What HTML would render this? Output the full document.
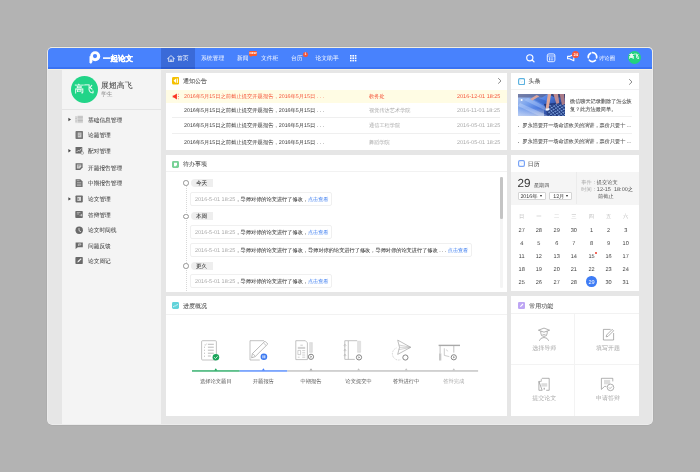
<!DOCTYPE html>
<html><head><meta charset="utf-8">
<style>
*{margin:0;padding:0;box-sizing:border-box}
html,body{width:700px;height:472px;overflow:hidden;background:#b3b3b3;font-family:"Liberation Sans",sans-serif;color:#555;text-rendering:geometricPrecision}
body{position:relative}
.a{position:absolute}
.t{position:absolute;white-space:nowrap;line-height:11.6px;height:11.6px}
.card{position:absolute;background:#fff}
.hr{position:absolute;height:1px;background:#efefef}
.nav{position:absolute;color:#fff;font-size:5.8px;line-height:10px;top:53.9px;white-space:nowrap}
.si{position:absolute;font-size:5.7px;color:#444;-webkit-text-stroke-width:0.06px;line-height:11.2px;left:88px;white-space:nowrap}
.sic{position:absolute;left:75px;width:8px;height:8px}
.arr{position:absolute;left:68px;width:0;height:0;border-top:2.2px solid transparent;border-bottom:2.2px solid transparent;border-left:3px solid #555}
.ttl{position:absolute;font-size:6px;color:#4c4c4c;-webkit-text-stroke-width:0.04px;line-height:12.4px;white-space:nowrap}
</style></head><body><div id="root" style="position:absolute;left:0;top:0;width:700px;height:472px;overflow:hidden;will-change:transform">
<!-- window -->
<div class="a" style="left:47px;top:47px;width:606px;height:378px;background:#ececec;border-radius:5px;box-shadow:0 0 0.6px 0.2px #9a9a9a"></div><div class="a" style="left:47.5px;top:47px;width:605px;height:6px;background:#f2eee0;border-radius:5px 5px 0 0"></div>
<div class="a" style="left:48px;top:48px;width:604px;height:376px;background:#e6e6e6;border-radius:4px"></div>
<div class="a" style="left:48px;top:48px;width:604px;height:21px;background:#4882fd;border-radius:4px 4px 0 0"></div><div class="a" style="left:48px;top:67.4px;width:604px;height:1.6px;background:#3a72f2"></div>
<div class="a" style="left:48px;top:69px;width:604px;height:1px;background:#f6f1e1"></div>
<div class="a" style="left:62px;top:70px;width:99px;height:354px;background:#f4f4f4"></div>

<!-- header -->
<div class="a" style="left:161.4px;top:48px;width:33.5px;height:21px;background:#3a6ad8"></div><div class="a" style="left:161.4px;top:67.4px;width:33.5px;height:1.6px;background:#2d5cd0"></div>

<!-- logo -->
<svg class="a" style="left:88px;top:50px" width="14" height="16" viewBox="0 0 14 16">
 <circle cx="7.2" cy="6.3" r="5.0" fill="#fff"/>
 <path d="M1.5 6.2 H4.4 V12 L2.9 14.1 L1.5 12.3 Z" fill="#fff"/>
 <circle cx="7.0" cy="6.1" r="2.1" fill="#4882fd"/>
</svg>
<div class="t" style="left:103px;top:53px;font-size:7.5px;font-weight:bold;color:#fff;-webkit-text-stroke:0.35px #fff">一起论文</div>
<!-- nav -->
<svg class="a" style="left:167.4px;top:54.6px" width="8" height="7.4" viewBox="0 0 8 7.4"><path d="M0.5 3.7 L4 0.6 L7.5 3.7" fill="none" stroke="#fff" stroke-width="0.75" stroke-linecap="round" stroke-linejoin="round"/><path d="M1.7 2.9 V6.8 H6.3 V2.9" fill="none" stroke="#fff" stroke-width="0.75"/><path d="M3.4 6.8 V4.8 H4.6 V6.8" fill="none" stroke="#fff" stroke-width="0.6"/></svg>
<div class="nav" style="left:177px">首页</div>
<div class="nav" style="left:201px">系统管理</div>
<div class="nav" style="left:237px">新闻</div>
<div class="a" style="left:249.1px;top:50.9px;width:7.8px;height:4.9px;background:#fa5b2e;border-radius:1.2px;color:#fff;font-size:3px;line-height:5px;text-align:center;font-weight:bold">NEW</div><div class="a" style="left:250.4px;top:55.6px;width:0;height:0;border-left:0.9px solid transparent;border-right:0.9px solid transparent;border-top:1.2px solid #fa5b2e"></div>
<div class="nav" style="left:261px">文件柜</div>
<div class="nav" style="left:291px">台历</div>
<div class="a" style="left:303px;top:51.7px;width:5.2px;height:5.2px;background:#f5553a;border-radius:50%;color:#fff;font-size:3.5px;line-height:5.2px;text-align:center;font-weight:bold">1</div>
<div class="nav" style="left:315.5px">论文助手</div>
<svg class="a" style="left:350px;top:55px" width="6.5" height="6.5" viewBox="0 0 6.5 6.5" fill="#fff">
 <rect x="0" y="0" width="1.6" height="1.6"/><rect x="2.4" y="0" width="1.6" height="1.6"/><rect x="4.8" y="0" width="1.6" height="1.6"/>
 <rect x="0" y="2.4" width="1.6" height="1.6"/><rect x="2.4" y="2.4" width="1.6" height="1.6"/><rect x="4.8" y="2.4" width="1.6" height="1.6"/>
 <rect x="0" y="4.8" width="1.6" height="1.6"/><rect x="2.4" y="4.8" width="1.6" height="1.6"/><rect x="4.8" y="4.8" width="1.6" height="1.6"/>
</svg>
<!-- right icons -->
<svg class="a" style="left:525px;top:53px" width="11" height="10" viewBox="0 0 11 10"><circle cx="4.8" cy="4.8" r="3.1" fill="none" stroke="#fff" stroke-width="1.15"/><path d="M7 7 L9 8.8" stroke="#fff" stroke-width="1.2" stroke-linecap="round"/></svg>
<svg class="a" style="left:546px;top:53px" width="10" height="10" viewBox="0 0 10 10"><rect x="1.3" y="0.9" width="7.6" height="7.8" rx="1.6" fill="none" stroke="#fff" stroke-width="0.85"/><path d="M1.3 3 H8.9" stroke="#fff" stroke-width="0.7"/><rect x="3" y="4.4" width="1.3" height="1.3" fill="#fff"/><rect x="3" y="6.2" width="1.3" height="1.2" fill="#fff"/><path d="M5 5 H7.2 M5 6.8 H7.2" stroke="#fff" stroke-width="0.7"/></svg>
<svg class="a" style="left:562px;top:48px" width="40" height="18" viewBox="0 0 40 18">
 <path d="M5.6 8.4 H7.6 L11.8 6.2 V12.8 L7.6 10.8 H5.6 Z" fill="none" stroke="#fff" stroke-width="1.1" stroke-linejoin="round"/>
 <g fill="none" stroke="#fff" stroke-width="1.7" stroke-linecap="round">
  <path d="M30.4 4.6 A4.2 4.2 0 0 1 34.6 9.8"/>
  <path d="M33.4 12.4 A4.2 4.2 0 0 1 27.4 12.2"/>
  <path d="M26.3 9.6 A4.2 4.2 0 0 1 28.6 5.2"/>
 </g>
</svg>
<div class="a" style="left:572.3px;top:50.6px;width:7px;height:7px;background:#f5553a;border-radius:50%;color:#fff;font-size:4px;line-height:7px;text-align:center;font-weight:bold">24</div>
<div class="nav" style="left:599px;font-size:5.35px">讨论圈</div>
<div class="a" style="left:627.5px;top:51px;width:13.2px;height:13.2px;background:#22d27e;border-radius:50%;color:#fff;font-size:5.2px;line-height:13.6px;text-align:center;-webkit-text-stroke:0.2px #fff">高飞</div>

<!-- sidebar -->
<div class="a" style="left:70.8px;top:75.8px;width:26.8px;height:26.8px;border-radius:50%;background:#22d488;color:#fff;font-size:9.6px;line-height:28.2px;text-align:center;-webkit-text-stroke:0.1px #fff">高飞</div>
<div class="t" style="left:101px;top:80.3px;font-size:7.9px;color:#3a3a3a">展翅高飞</div>
<div class="t" style="left:101px;top:89.5px;font-size:5.8px;color:#8a8a8a">学生</div>
<div class="a" style="left:62px;top:108.5px;width:99px;height:1px;background:#e4e4e4"></div>
<div class="si" style="top:115.8px">基础信息管理</div>
<div class="si" style="top:131.1px">论题管理</div>
<div class="si" style="top:147.0px">配对管理</div>
<div class="si" style="top:163.9px">开题报告管理</div>
<div class="si" style="top:179.2px">中期报告管理</div>
<div class="si" style="top:195.1px">论文管理</div>
<div class="si" style="top:210.8px">答辩管理</div>
<div class="si" style="top:226.4px">论文时间线</div>
<div class="si" style="top:241.6px">问题反馈</div>
<div class="si" style="top:257.2px">论文周记</div>


<!-- sidebar icons -->
<svg class="a" style="left:0;top:0" width="700" height="472" viewBox="0 0 700 472">
 <g>
  <!-- 1 list -->
  <rect x="75.3" y="116.3" width="7.6" height="6.9" fill="#e6e6e6"/>
  <path d="M77.6 116.3 H82.9 M77.6 117.7 H82.9 M77.6 119.1 H82.9 M77.6 120.5 H82.9 M77.6 121.9 H82.9 M75.3 117 H76.8 M75.3 118.6 H76.8 M75.3 120.2 H76.8 M75.3 121.8 H76.8" stroke="#aaa" stroke-width="0.7"/>
  <!-- 2 doc -->
  <rect x="75.5" y="131.1" width="7.5" height="7.9" rx="0.8" fill="#777"/>
  <rect x="77.8" y="132.6" width="3.6" height="4.8" fill="#d0d0d0"/>
  <path d="M78.4 134 H80.8 M78.4 135.6 H80.2" stroke="#777" stroke-width="0.5"/>
  <!-- 3 pair -->
  <rect x="75.5" y="147" width="6.8" height="6.6" rx="0.6" fill="#6a6a6a"/>
  <path d="M76.6 152 L78.4 150.2 L79.4 151.2 L81.4 148.6" fill="none" stroke="#e8e8e8" stroke-width="0.8"/>
  <circle cx="82.2" cy="153" r="1.4" fill="#f3f3f3" stroke="#777" stroke-width="0.5"/>
  <!-- 4 report -->
  <path d="M75.6 163.2 H82.6 V167.6 L80.2 170.1 H75.6 Z" fill="#6a6a6a"/>
  <path d="M76.9 164.5 H81.3 V166.8 L79.7 168.6 H76.9 Z" fill="#d8d8d8"/>
  <path d="M77.6 165.4 H80.6 M77.6 166.8 H79.4" stroke="#6a6a6a" stroke-width="0.5"/>
  <!-- 5 mid report -->
  <path d="M75.6 179.3 H80.4 L82.6 181.5 V186.9 H75.6 Z" fill="#707070"/>
  <path d="M77 182.6 H81.2 M77 184.2 H81.2 M77 185.6 H81.2" stroke="#d8d8d8" stroke-width="0.55"/>
  <path d="M76.8 180.6 H79.6" stroke="#d8d8d8" stroke-width="0.55"/>
  <!-- 6 thesis -->
  <rect x="75.5" y="195.4" width="7.3" height="7" rx="0.8" fill="#6c6c6c"/>
  <rect x="77.3" y="196.9" width="3.7" height="4" fill="#d8d8d8"/>
  <path d="M78.2 198.1 V200" stroke="#6c6c6c" stroke-width="0.8"/>
  <!-- 7 defense -->
  <rect x="75.3" y="210.9" width="7.5" height="7.2" rx="0.8" fill="#6c6c6c"/>
  <path d="M76.8 212.6 H80.4 M76.8 214 H79" stroke="#d8d8d8" stroke-width="0.6"/>
  <path d="M79.6 215.2 H82 M81 214.2 L82.2 215.2 L81 216.2" fill="none" stroke="#e8e8e8" stroke-width="0.6"/>
  <!-- 8 clock -->
  <circle cx="79.2" cy="230.3" r="3.7" fill="#6a6a6a"/>
  <path d="M79 228 V230.6 L81 231.8" fill="none" stroke="#f3f3f3" stroke-width="0.75"/>
  <!-- 9 feedback -->
  <path d="M75.6 242.5 H82.8 V247.2 H77.8 L75.6 249.1 Z" fill="#6a6a6a"/>
  <path d="M78.6 243.8 V246 M78.6 243.8 H80.8 V245 H78.6" fill="none" stroke="#e8e8e8" stroke-width="0.6"/>
  <!-- 10 weekly -->
  <rect x="75.4" y="256.9" width="7.4" height="7.2" rx="0.8" fill="#6a6a6a"/>
  <path d="M77.4 262.4 L77.8 261 L80.8 258.2 L81.6 259 L78.7 261.9 Z" fill="#f0f0f0"/>
 </g>
 <g fill="#444">
  <path d="M68.4 117.8 L71 119.5 L68.4 121.2 Z"/>
  <path d="M68.4 149.1 L71 150.8 L68.4 152.5 Z"/>
  <path d="M68.4 197.2 L71 198.9 L68.4 200.6 Z"/>
 </g>
</svg>

<!-- cards -->
<div class="card" style="left:166px;top:72.6px;width:341px;height:77.6px"></div>
<div class="card" style="left:166px;top:154.6px;width:341px;height:137px"></div>
<div class="card" style="left:166px;top:296.3px;width:341px;height:119.4px"></div>
<div class="card" style="left:511px;top:72.6px;width:127.5px;height:77.9px"></div>
<div class="card" style="left:511px;top:154.5px;width:127.5px;height:136px"></div>
<div class="card" style="left:511px;top:296px;width:127.5px;height:119.7px"></div>

<!-- card1 通知公告 -->
<svg class="a" style="left:172px;top:77.3px" width="7.4" height="7.4" viewBox="0 0 7.4 7.4"><rect width="7.4" height="7.4" rx="1.5" fill="#f5c000"/><path d="M1.5 3.7 L4 1.5 V5.9 Z" fill="#fff"/><rect x="4.7" y="1.5" width="1.3" height="4.4" fill="#fff" opacity="0.85"/></svg>
<div class="ttl" style="left:183px;top:76.4px">通知公告</div>
<svg class="a" style="left:496.6px;top:77.3px" width="5" height="8" viewBox="0 0 5 8"><path d="M1.2 1.2 L4 3.9 L1.2 6.6" fill="none" stroke="#888" stroke-width="1"/></svg>
<div class="a" style="left:166px;top:89.7px;width:341px;height:13.6px;background:#fffce4"></div>
<svg class="a" style="left:172px;top:93px" width="8" height="7" viewBox="0 0 8 7"><path d="M0.7 2.6 H1.9 L4.9 0.6 V6.4 L1.9 4.4 H0.7 Z" fill="#fb3322"/><path d="M5.9 1.5 L6.8 1.1 M5.9 3.5 H7 M5.9 5.5 L6.8 5.9" stroke="#fb5a4a" stroke-width="0.7"/></svg>
<div class="t" style="left:184px;top:92.1px;font-size:5.3px;color:#f5553a">2016年5月15日之前截止提交开题报告，2016年5月15日 . . .</div>
<div class="t" style="left:369px;top:92.1px;font-size:5.2px;color:#f5553a">教务处</div>
<div class="t" style="left:457px;top:92.1px;font-size:5.5px;color:#f5553a">2016-12-01 18:25</div>
<div class="t" style="left:184px;top:105.6px;font-size:5.3px;color:#444;-webkit-text-stroke-width:0.02px">2016年5月15日之前截止提交开题报告，2016年5月15日 . . .</div>
<div class="t" style="left:369px;top:105.6px;font-size:5.2px;color:#aaa">视觉传达艺术学院</div>
<div class="t" style="left:457px;top:105.6px;font-size:5.5px;color:#aaa">2016-11-01 18:25</div>
<div class="hr" style="left:172.4px;top:117px;width:328px"></div>
<div class="t" style="left:184px;top:120.6px;font-size:5.3px;color:#444;-webkit-text-stroke-width:0.02px">2016年5月15日之前截止提交开题报告，2016年5月15日 . . .</div>
<div class="t" style="left:369px;top:120.6px;font-size:5.2px;color:#aaa">通信工程学院</div>
<div class="t" style="left:457px;top:120.6px;font-size:5.5px;color:#aaa">2016-05-01 18:25</div>
<div class="hr" style="left:172.4px;top:132.7px;width:328px"></div>
<div class="t" style="left:184px;top:137.9px;font-size:5.3px;color:#444;-webkit-text-stroke-width:0.02px">2016年5月15日之前截止提交开题报告，2016年5月15日 . . .</div>
<div class="t" style="left:369px;top:137.9px;font-size:5.2px;color:#aaa">舞蹈学院</div>
<div class="t" style="left:457px;top:137.9px;font-size:5.5px;color:#aaa">2016-05-01 18:25</div>

<!-- card2 待办事项 -->
<svg class="a" style="left:172px;top:160.9px" width="7" height="7" viewBox="0 0 7 7"><rect width="7" height="7" rx="1.4" fill="#78d196"/><path d="M2 1.7 H5 V3.9 L3.9 5.3 H2 Z" fill="#fff"/></svg>
<div class="ttl" style="left:183px;top:159.3px">待办事项</div>
<div class="hr" style="left:166px;top:171.2px;width:341px;background:#f2f2f2"></div>
<div class="a" style="left:185.6px;top:186px;width:0;height:105px;border-left:0.6px dotted #d8d8d8"></div>
<div class="a" style="left:183px;top:180.4px;width:5.6px;height:5.6px;border-radius:50%;border:1.1px solid #959595;background:#fff"></div>
<div class="a" style="left:190.7px;top:178.7px;width:22.3px;height:8px;background:#eeeeee;border-radius:4px 0 0 4px;font-size:5.7px;line-height:10px;color:#333;padding-left:5.2px;-webkit-text-stroke-width:0.05px;white-space:nowrap">今天</div>
<div class="a" style="left:190px;top:191.5px;width:142.4px;height:14px;border:0.6px solid #f0f0f0;border-radius:2px;background:#fff"></div>
<div class="t" style="left:195px;top:194.5px;font-size:5.5px;color:#aaa">2016-5-01 18:25<span style="font-size:5.2px;color:#383838;-webkit-text-stroke-width:0.05px">，导师对你的论文进行了修改，</span><span style="font-size:5.1px;color:#3b7cf0">点击查看</span></div>
<div class="a" style="left:183px;top:213.8px;width:5.6px;height:5.6px;border-radius:50%;border:1.1px solid #959595;background:#fff"></div>
<div class="a" style="left:190.7px;top:212.1px;width:22.3px;height:8px;background:#eeeeee;border-radius:4px 0 0 4px;font-size:5.7px;line-height:10px;color:#333;padding-left:5.2px;-webkit-text-stroke-width:0.05px;white-space:nowrap">本周</div>
<div class="a" style="left:190px;top:224.9px;width:142.4px;height:14px;border:0.6px solid #f0f0f0;border-radius:2px;background:#fff"></div>
<div class="t" style="left:195px;top:227.9px;font-size:5.5px;color:#aaa">2016-5-01 18:25<span style="font-size:5.2px;color:#383838;-webkit-text-stroke-width:0.05px">，导师对你的论文进行了修改，</span><span style="font-size:5.1px;color:#3b7cf0">点击查看</span></div>
<div class="a" style="left:190px;top:243px;width:282px;height:14px;border:0.6px solid #f0f0f0;border-radius:2px;background:#fff"></div>
<div class="t" style="left:195px;top:246.0px;font-size:5.5px;color:#aaa">2016-5-01 18:25<span style="font-size:5.2px;color:#383838;-webkit-text-stroke-width:0.05px">，导师对你的论文进行了修改，导师对你的论文进行了修改，导师对你的论文进行了修改 . . . </span><span style="font-size:5.1px;color:#3b7cf0">点击查看</span></div>
<div class="a" style="left:183px;top:263.4px;width:5.6px;height:5.6px;border-radius:50%;border:1.1px solid #959595;background:#fff"></div>
<div class="a" style="left:190.7px;top:261.7px;width:22.3px;height:8px;background:#eeeeee;border-radius:4px 0 0 4px;font-size:5.7px;line-height:10px;color:#333;padding-left:5.2px;-webkit-text-stroke-width:0.05px;white-space:nowrap">更久</div>
<div class="a" style="left:190px;top:274.3px;width:142.4px;height:14px;border:0.6px solid #f0f0f0;border-radius:2px;background:#fff"></div>
<div class="t" style="left:195px;top:277.3px;font-size:5.5px;color:#aaa">2016-5-01 18:25<span style="font-size:5.2px;color:#383838;-webkit-text-stroke-width:0.05px">，导师对你的论文进行了修改，</span><span style="font-size:5.1px;color:#3b7cf0">点击查看</span></div>
<div class="a" style="left:500px;top:177px;width:3px;height:111px;background:#f4f4f4;border-radius:1.5px"></div>
<div class="a" style="left:500.2px;top:177px;width:2.6px;height:42px;background:#c4c4c4;border-radius:1.3px"></div>

<!-- card3 进度概况 -->
<svg class="a" style="left:172.3px;top:302.1px" width="7" height="7" viewBox="0 0 7 7"><rect width="7" height="7" rx="1.4" fill="#62d3da"/><path d="M1 4.9 L2.4 4.1 L3.4 3.9 L4.4 3.2 L6 2.4" fill="none" stroke="#fff" stroke-width="0.75" opacity="0.9"/></svg>
<div class="ttl" style="left:183px;top:301.1px">进度概况</div>
<div class="hr" style="left:166px;top:313.6px;width:341px;background:#f2f2f2"></div>
<svg class="a" style="left:0;top:0" width="700" height="472" viewBox="0 0 700 472">
 <!-- progress line -->
 <rect x="192" y="370.3" width="47.7" height="1.3" fill="#1aa55a"/>
 <rect x="239.7" y="370.3" width="47.6" height="1.3" fill="#4882fd"/>
 <rect x="287.3" y="370.3" width="190.8" height="1.3" fill="#bcbcbc"/>
 <path d="M214.3 370.4 L215.8 368.2 L217.3 370.4 Z" fill="#1aa55a"/>
 <path d="M261.9 370.4 L263.4 368.2 L264.9 370.4 Z" fill="#4882fd"/>
 <path d="M309.5 370.4 L311 368.2 L312.5 370.4 Z" fill="#aaa"/>
 <path d="M357.1 370.4 L358.6 368.2 L360.1 370.4 Z" fill="#c4c4c4"/>
 <path d="M404.7 370.4 L406.2 368.2 L407.7 370.4 Z" fill="#c4c4c4"/>
 <path d="M452.3 370.4 L453.8 368.2 L455.3 370.4 Z" fill="#c4c4c4"/>
 <g fill="none" stroke="#a9a9a9" stroke-width="0.7">
  <!-- icon1 -->
  <rect x="201.6" y="340.7" width="14.8" height="19.3" rx="1"/>
  <path d="M207.9 344.3 H213.8 M207.9 347.2 H213.8 M207.9 350.2 H213.8 M207.9 353.2 H213.8 M207.9 356 H210.8" stroke-width="0.8"/>
  <path d="M204.6 344.8 L205.3 345.3 L206.6 343.6 M204.5 346.6 V348 M204.5 349.6 V351 M204.5 352.6 V354 M204.5 355.6 V357" stroke-width="0.6"/>
  <!-- icon2 -->
  <path d="M264 340.7 H250 V360 H259.8"/>
  <path d="M251.6 357.8 L252.4 353.6 L265 341.2 L267.8 344 L255.2 356.6 Z" stroke="#a4a4a4" stroke-width="0.75"/>
  <path d="M252.8 353.6 L255.2 356.2 M263.6 343 L266 345.4"/>
  <!-- icon3 -->
  <path d="M295.8 340.7 H305.4 L307.4 342.8 V359.6 H295.8 Z"/>
  <path d="M309.6 342.6 H312.4 V352.4 H309.6 Z M310.6 343 V352 M311.5 343 V352" stroke-width="0.5" stroke="#c4c4c4"/>
  <path d="M300.4 345.2 H302.8" stroke-width="0.6"/>
  <path d="M297.8 347.4 H305.2 M297.8 348.4 H305.2 M302.2 350.6 H305.2 M302.2 352.8 H305.2 M302.2 355 H305.2 M297.8 357.2 H299.6 M302.2 357.2 H305.2" stroke-width="0.55"/>
  <path d="M297.9 350.4 H300.6 V354.6 H297.9 Z" stroke-width="0.55"/>
  <!-- icon4 -->
  <path d="M357.2 340.7 H344.8 V359.4 H354.8"/>
  <path d="M348.3 341 V359.2"/>
  <path d="M357.6 341.3 H360.6 V352.3 H357.6 Z M358.6 341.6 V352 M359.6 341.6 V352" stroke-width="0.5" stroke="#c4c4c4"/>
  <path d="M344 345.3 L345 344.3 L346 345.3 L345 346.3 Z M344 350.2 L345 349.2 L346 350.2 L345 351.2 Z M344 355.2 L345 354.2 L346 355.2 L345 356.2 Z" stroke-width="0.6"/>
  <!-- icon5 -->
  <path d="M397.7 340.1 L410.7 347.3 L397.7 354.4 L399.5 347.3 Z" stroke-width="0.75"/>
  <path d="M399.5 347.3 L410.7 347.3 M398.8 345 L410.5 347.1 M398.8 349.6 L410.5 347.5" stroke-width="0.5"/>
  <path d="M396.4 348 A5.6 5.6 0 1 0 400.8 359.6" stroke-dasharray="0.8 0.8" stroke-width="0.6"/>
  <!-- icon6 -->
  <path d="M438.6 345.4 H460" stroke-width="1.4"/>
  <path d="M440.1 345.4 V353"/>
  <rect x="439" y="353.3" width="2.3" height="7.2" fill="#c8c8c8" stroke="none"/>
  <path d="M444.3 348.3 V355.4 L449.3 356.6 M446.5 349.6 L447.6 351.3" stroke-width="0.6"/>
  <path d="M453.8 345.4 V352.6"/>
 </g>
 <!-- badges -->
 <circle cx="215.9" cy="357.3" r="3.3" fill="#1aa55a"/>
 <path d="M214.2 357.3 L215.5 358.5 L217.6 356.3" fill="none" stroke="#fff" stroke-width="0.8"/>
 <circle cx="263.9" cy="356.8" r="3.3" fill="#3a78f0"/>
 <rect x="262.5" y="355.3" width="0.95" height="3" fill="#fff"/><rect x="264.35" y="355.3" width="0.95" height="3" fill="#fff"/>
 <g fill="#fff" stroke="#858585" stroke-width="1">
  <circle cx="311" cy="356.8" r="2.6"/>
  <circle cx="359" cy="357.4" r="2.6"/>
  <circle cx="405.4" cy="357.5" r="2.6"/>
  <circle cx="453.8" cy="357.3" r="2.6"/>
 </g>
 <path d="M310.4 355.6 L312.2 356.8 L310.4 358 Z M358.4 356.2 L360.2 357.4 L358.4 358.6 Z M453.2 356.1 L455 357.3 L453.2 358.5 Z" fill="#8c8c8c"/>
</svg>
<div class="t" style="left:166px;top:377.4px;font-size:5.3px;color:#555;width:100px;text-align:center;left:165.8px">选择论文题目</div>
<div class="t" style="top:377.4px;font-size:5.3px;color:#555;width:100px;text-align:center;left:213.4px">开题报告</div>
<div class="t" style="top:377.4px;font-size:5.3px;color:#555;width:100px;text-align:center;left:261px">中期报告</div>
<div class="t" style="top:377.4px;font-size:5.3px;color:#555;width:100px;text-align:center;left:308.6px">论文提交中</div>
<div class="t" style="top:377.4px;font-size:5.3px;color:#555;width:100px;text-align:center;left:356.2px">答辩进行中</div>
<div class="t" style="top:377.4px;font-size:5.3px;color:#aaa;width:100px;text-align:center;left:403.8px">答辩完成</div>

<!-- card4 头条 -->
<svg class="a" style="left:517.9px;top:77.6px" width="7.2" height="7.2" viewBox="0 0 7.2 7.2"><rect x="0.6" y="0.6" width="6" height="6" rx="1.3" fill="#fff" stroke="#5cb2e0" stroke-width="1.2"/><path d="M2.2 2.4 L3 3.4 M3.4 4.4 L4.6 3.6" fill="none" stroke="#8cc8ea" stroke-width="0.5"/></svg>
<div class="ttl" style="left:528.5px;top:76.4px">头条</div>
<svg class="a" style="left:628.4px;top:77.6px" width="5" height="8" viewBox="0 0 5 8"><path d="M1.2 1.2 L4 3.9 L1.2 6.6" fill="none" stroke="#888" stroke-width="1"/></svg>
<div class="hr" style="left:511px;top:88.8px;width:127.5px;background:#f2f2f2"></div>
<div class="a" style="left:518px;top:93.9px;width:47px;height:22.2px;overflow:hidden"><svg class="a" style="left:0;top:0;filter:blur(0.35px)" width="47" height="22.2" viewBox="0 0 47 22">
 <defs>
  <linearGradient id="kb" x1="0" y1="0" x2="1" y2="0.5">
   <stop offset="0" stop-color="#b4c8ec"/><stop offset="0.3" stop-color="#7ea6ee"/><stop offset="0.6" stop-color="#4a7ae0"/><stop offset="1" stop-color="#22357a"/>
  </linearGradient>
  <linearGradient id="kb2" x1="0" y1="0" x2="0" y2="1">
   <stop offset="0" stop-color="#fff" stop-opacity="0"/><stop offset="1" stop-color="#dfe8f8" stop-opacity="0.7"/>
  </linearGradient>
  <pattern id="keys" width="2.6" height="2.6" patternUnits="userSpaceOnUse" patternTransform="rotate(-32) skewX(10)">
   <rect width="1.6" height="1.5" fill="#9cc8ff"/>
  </pattern>
 </defs>
 <rect width="47" height="22" fill="url(#kb)"/>
 <path d="M0 0 H30 L24 3.4 L0 3.4 Z" fill="#5a5f8a" opacity="0.7"/><path d="M30 0 H47 V4 L36 3 Z" fill="#30365e" opacity="0.8"/>
 <path d="M6 6 L47 26 V22 L10 4 Z" fill="#c8dcff" opacity="0.35"/>
 <path d="M2 9 L40 26 L30 26 L0 12 Z" fill="#d8e6ff" opacity="0.35"/>
 <path d="M12 4 L47 20 L47 14 L18 3 Z" fill="#2a56b8" opacity="0.45"/>
 <path d="M26 10 L47 8 L47 22 L30 22 Z" fill="#223a80"/>
 <rect x="26" y="8" width="21" height="14" fill="url(#keys)" opacity="0.85" clip-path="polygon(0 0)"/>
 <path d="M27 12 L47 9 L47 22 L31 22 Z" fill="url(#keys)" opacity="0.75"/>
 <rect x="0" y="14" width="26" height="8" fill="url(#kb2)"/>
 <path d="M12 5 L18.6 1 L21.4 2.2 L14.4 6.4 Z" fill="#d9a6a0"/>
 <path d="M29.8 0 L33.2 0 L30.6 14.2 L27.6 14.8 Z" fill="#e2a898"/>
 <path d="M27.4 14.6 L30.8 14 L31.4 16 L28 16.6 Z" fill="#f4f4fa"/>
 <path d="M35.4 0 L40 0 L41.2 9 L38.4 10 Z" fill="#bf8c92"/>
 <path d="M41.6 0 L46 0 L47 10 L44 11 Z" fill="#a97a88"/>
 <circle cx="3.6" cy="6" r="1" fill="#fff"/>
</svg></div>
<div class="t" style="left:570px;top:97px;font-size:5.15px;color:#555;-webkit-text-stroke-width:0.08px">微信聊天记录删除了怎么恢</div>
<div class="t" style="left:570px;top:105px;font-size:5.15px;color:#555;-webkit-text-stroke-width:0.08px">复？此方法最简单。</div>
<div class="hr" style="left:570px;top:115.6px;width:62px;background:#f0f0f0"></div>
<div class="a" style="left:517.8px;top:125.6px;width:1px;height:1px;background:#999"></div>
<div class="t" style="left:522.5px;top:120.9px;font-size:5.15px;color:#555;-webkit-text-stroke-width:0.08px">罗永浩要开一场命运攸关的演讲，票价只要十 ...</div>
<div class="hr" style="left:518px;top:132.8px;width:114px;background:#f0f0f0"></div>
<div class="a" style="left:517.8px;top:142.2px;width:1px;height:1px;background:#999"></div>
<div class="t" style="left:522.5px;top:136.9px;font-size:5.15px;color:#555;-webkit-text-stroke-width:0.08px">罗永浩要开一场命运攸关的演讲，票价只要十 ...</div>

<!-- card5 日历 -->
<svg class="a" style="left:517.9px;top:160.2px" width="7" height="7" viewBox="0 0 7 7"><rect x="0.6" y="0.6" width="5.8" height="5.8" rx="1.3" fill="#fff" stroke="#79a4f6" stroke-width="1.2"/><path d="M2.4 2.2 L3.4 3 M3.6 4 L4.4 3.4" fill="none" stroke="#a8c4f8" stroke-width="0.5"/></svg>
<div class="ttl" style="left:527.7px;top:159.2px">日历</div>
<div class="a" style="left:511px;top:172px;width:127.5px;height:32.6px;background:#f5f5f5"></div>
<div class="a" style="left:575.8px;top:172px;width:0.8px;height:32.4px;background:#ececec"></div>
<div class="t" style="left:517.5px;top:178.4px;font-size:11.7px;line-height:12px;height:12px;color:#333">29</div>
<div class="t" style="left:534px;top:181px;font-size:5.1px;color:#444">星期四</div>
<div class="a" style="left:517.6px;top:191.9px;width:28px;height:7.9px;background:#fff;border:0.7px solid #d4d4d4;border-radius:1px"></div>
<div class="t" style="left:520.4px;top:191.9px;font-size:5.3px;color:#333">2016年</div>
<div class="a" style="left:540.2px;top:195.3px;width:0;height:0;border-left:1.4px solid transparent;border-right:1.4px solid transparent;border-top:2.2px solid #222"></div>
<div class="a" style="left:549.4px;top:191.9px;width:22.3px;height:7.9px;background:#fff;border:0.7px solid #d4d4d4;border-radius:1px"></div>
<div class="t" style="left:553.2px;top:191.9px;font-size:5.3px;color:#333">12月</div>
<div class="a" style="left:566.2px;top:195.3px;width:0;height:0;border-left:1.4px solid transparent;border-right:1.4px solid transparent;border-top:2.2px solid #222"></div>
<div class="t" style="left:581.3px;top:177.7px;font-size:5.2px;color:#aaa">事件：<span style="color:#555">提交论文</span></div>
<div class="t" style="left:581.3px;top:185px;font-size:5.2px;color:#aaa">时间：<span style="color:#555;font-size:5.5px">12-15&nbsp; 18:00</span><span style="color:#555">之</span></div>
<div class="t" style="left:598px;top:191.9px;font-size:5.2px;color:#555">前截止</div>
<div class="t" style="left:511.70000000000005px;top:211.6px;width:20px;text-align:center;font-size:5.3px;color:#bbb">日</div>
<div class="t" style="left:528.8px;top:211.6px;width:20px;text-align:center;font-size:5.3px;color:#bbb">一</div>
<div class="t" style="left:546.7px;top:211.6px;width:20px;text-align:center;font-size:5.3px;color:#bbb">二</div>
<div class="t" style="left:563.8px;top:211.6px;width:20px;text-align:center;font-size:5.3px;color:#bbb">三</div>
<div class="t" style="left:581.5px;top:211.6px;width:20px;text-align:center;font-size:5.3px;color:#bbb">四</div>
<div class="t" style="left:598.6px;top:211.6px;width:20px;text-align:center;font-size:5.3px;color:#bbb">五</div>
<div class="t" style="left:615.7px;top:211.6px;width:20px;text-align:center;font-size:5.3px;color:#bbb">六</div>
<div class="a" style="left:586.3px;top:276.3px;width:10.4px;height:10.4px;border-radius:50%;background:#3e7cf5"></div>
<div class="a" style="left:595.2px;top:252.4px;width:1.9px;height:1.9px;border-radius:50%;background:#f03a2a"></div>
<div class="t" style="left:511.70000000000005px;top:225.9px;width:20px;text-align:center;font-size:5.6px;color:#444">27</div>
<div class="t" style="left:528.8px;top:225.9px;width:20px;text-align:center;font-size:5.6px;color:#444">28</div>
<div class="t" style="left:546.7px;top:225.9px;width:20px;text-align:center;font-size:5.6px;color:#444">29</div>
<div class="t" style="left:563.8px;top:225.9px;width:20px;text-align:center;font-size:5.6px;color:#444">30</div>
<div class="t" style="left:581.5px;top:225.9px;width:20px;text-align:center;font-size:5.6px;color:#444">1</div>
<div class="t" style="left:598.6px;top:225.9px;width:20px;text-align:center;font-size:5.6px;color:#444">2</div>
<div class="t" style="left:615.7px;top:225.9px;width:20px;text-align:center;font-size:5.6px;color:#444">3</div>
<div class="t" style="left:511.70000000000005px;top:238.8px;width:20px;text-align:center;font-size:5.6px;color:#444">4</div>
<div class="t" style="left:528.8px;top:238.8px;width:20px;text-align:center;font-size:5.6px;color:#444">5</div>
<div class="t" style="left:546.7px;top:238.8px;width:20px;text-align:center;font-size:5.6px;color:#444">6</div>
<div class="t" style="left:563.8px;top:238.8px;width:20px;text-align:center;font-size:5.6px;color:#444">7</div>
<div class="t" style="left:581.5px;top:238.8px;width:20px;text-align:center;font-size:5.6px;color:#444">8</div>
<div class="t" style="left:598.6px;top:238.8px;width:20px;text-align:center;font-size:5.6px;color:#444">9</div>
<div class="t" style="left:615.7px;top:238.8px;width:20px;text-align:center;font-size:5.6px;color:#444">10</div>
<div class="t" style="left:511.70000000000005px;top:251.5px;width:20px;text-align:center;font-size:5.6px;color:#444">11</div>
<div class="t" style="left:528.8px;top:251.5px;width:20px;text-align:center;font-size:5.6px;color:#444">12</div>
<div class="t" style="left:546.7px;top:251.5px;width:20px;text-align:center;font-size:5.6px;color:#444">13</div>
<div class="t" style="left:563.8px;top:251.5px;width:20px;text-align:center;font-size:5.6px;color:#444">14</div>
<div class="t" style="left:581.5px;top:251.5px;width:20px;text-align:center;font-size:5.6px;color:#444">15</div>
<div class="t" style="left:598.6px;top:251.5px;width:20px;text-align:center;font-size:5.6px;color:#444">16</div>
<div class="t" style="left:615.7px;top:251.5px;width:20px;text-align:center;font-size:5.6px;color:#444">17</div>
<div class="t" style="left:511.70000000000005px;top:264.5px;width:20px;text-align:center;font-size:5.6px;color:#444">18</div>
<div class="t" style="left:528.8px;top:264.5px;width:20px;text-align:center;font-size:5.6px;color:#444">19</div>
<div class="t" style="left:546.7px;top:264.5px;width:20px;text-align:center;font-size:5.6px;color:#444">20</div>
<div class="t" style="left:563.8px;top:264.5px;width:20px;text-align:center;font-size:5.6px;color:#444">21</div>
<div class="t" style="left:581.5px;top:264.5px;width:20px;text-align:center;font-size:5.6px;color:#444">22</div>
<div class="t" style="left:598.6px;top:264.5px;width:20px;text-align:center;font-size:5.6px;color:#444">23</div>
<div class="t" style="left:615.7px;top:264.5px;width:20px;text-align:center;font-size:5.6px;color:#444">24</div>
<div class="t" style="left:511.70000000000005px;top:277.5px;width:20px;text-align:center;font-size:5.6px;color:#444">25</div>
<div class="t" style="left:528.8px;top:277.5px;width:20px;text-align:center;font-size:5.6px;color:#444">26</div>
<div class="t" style="left:546.7px;top:277.5px;width:20px;text-align:center;font-size:5.6px;color:#444">27</div>
<div class="t" style="left:563.8px;top:277.5px;width:20px;text-align:center;font-size:5.6px;color:#444">28</div>
<div class="t" style="left:581.5px;top:277.5px;width:20px;text-align:center;font-size:5.6px;color:#fff">29</div>
<div class="t" style="left:598.6px;top:277.5px;width:20px;text-align:center;font-size:5.6px;color:#444">30</div>
<div class="t" style="left:615.7px;top:277.5px;width:20px;text-align:center;font-size:5.6px;color:#444">31</div>

<!-- card6 常用功能 -->
<svg class="a" style="left:517.9px;top:302px" width="7" height="7" viewBox="0 0 7 7"><rect width="7" height="7" rx="1.2" fill="#bea6f4"/><path d="M2 5 L2.3 3.9 L4.6 1.6 L5.4 2.4 L3.1 4.7 Z" fill="#fff"/></svg>
<div class="ttl" style="left:529.3px;top:301px">常用功能</div>
<div class="hr" style="left:511px;top:313px;width:127.5px;background:#f2f2f2"></div>
<div class="a" style="left:573.8px;top:313.5px;width:0.8px;height:102px;background:#f3f3f3"></div>
<div class="hr" style="left:511px;top:364px;width:127.5px;background:#f3f3f3"></div>
<svg class="a" style="left:0;top:0" width="700" height="472" viewBox="0 0 700 472">
 <g fill="none" stroke="#888" stroke-width="0.65">
  <!-- graduate -->
  <path d="M538.4 330.2 L544 328.1 L549.6 330.2 L544 332.2 Z"/>
  <path d="M540.8 331.2 V333.2 A3.2 3.2 0 0 0 547.2 333.2 V331.2"/>
  <path d="M542.5 334.3 Q544 335.3 545.5 334.3" stroke-width="0.55"/>
  <path d="M539.3 340.8 A4.9 4.6 0 0 1 548.7 340.8"/>
  <!-- edit -->
  <path d="M610.6 329.4 H603.4 V340 H613.6 V333"/>
  <path d="M606.2 336.8 L606.6 335 L612.2 329.4 L613.6 330.8 L608 336.4 Z"/>
  <!-- submit -->
  <path d="M541.9 378.3 H549.2 V390.3 H546.2 M542.2 390.3 H538.9 V381.4 Z"/>
  <path d="M538.9 381.4 H541.3 V378.8" stroke-width="0.55"/>
  <rect x="541.4" y="383.2" width="5.8" height="3.4" fill="#dcdcdc" stroke="none"/>
  <path d="M544.2 387.8 V389.6" stroke-width="0.9"/>
  <!-- defense -->
  <path d="M612.8 381.4 V378.3 H601.4 V389.4 L604.6 386.4 H606.4"/>
  <rect x="604" y="379.9" width="6.2" height="4.4" fill="#dedede" stroke="none"/>
  <circle cx="610.5" cy="387.4" r="3.3" fill="#fff"/>
  <path d="M608.9 387.4 L610.1 388.6 L612.1 386.5" stroke-width="0.6"/>
 </g>
</svg>
<div class="t" style="left:532.3px;top:343.8px;font-size:6px;color:#aaa">选择导师</div>
<div class="t" style="left:596px;top:344px;font-size:6px;color:#aaa">填写开题</div>
<div class="t" style="left:532.3px;top:393.6px;font-size:6px;color:#aaa">提交论文</div>
<div class="t" style="left:596px;top:393.6px;font-size:6px;color:#aaa">申请答辩</div>
</div></body></html>
